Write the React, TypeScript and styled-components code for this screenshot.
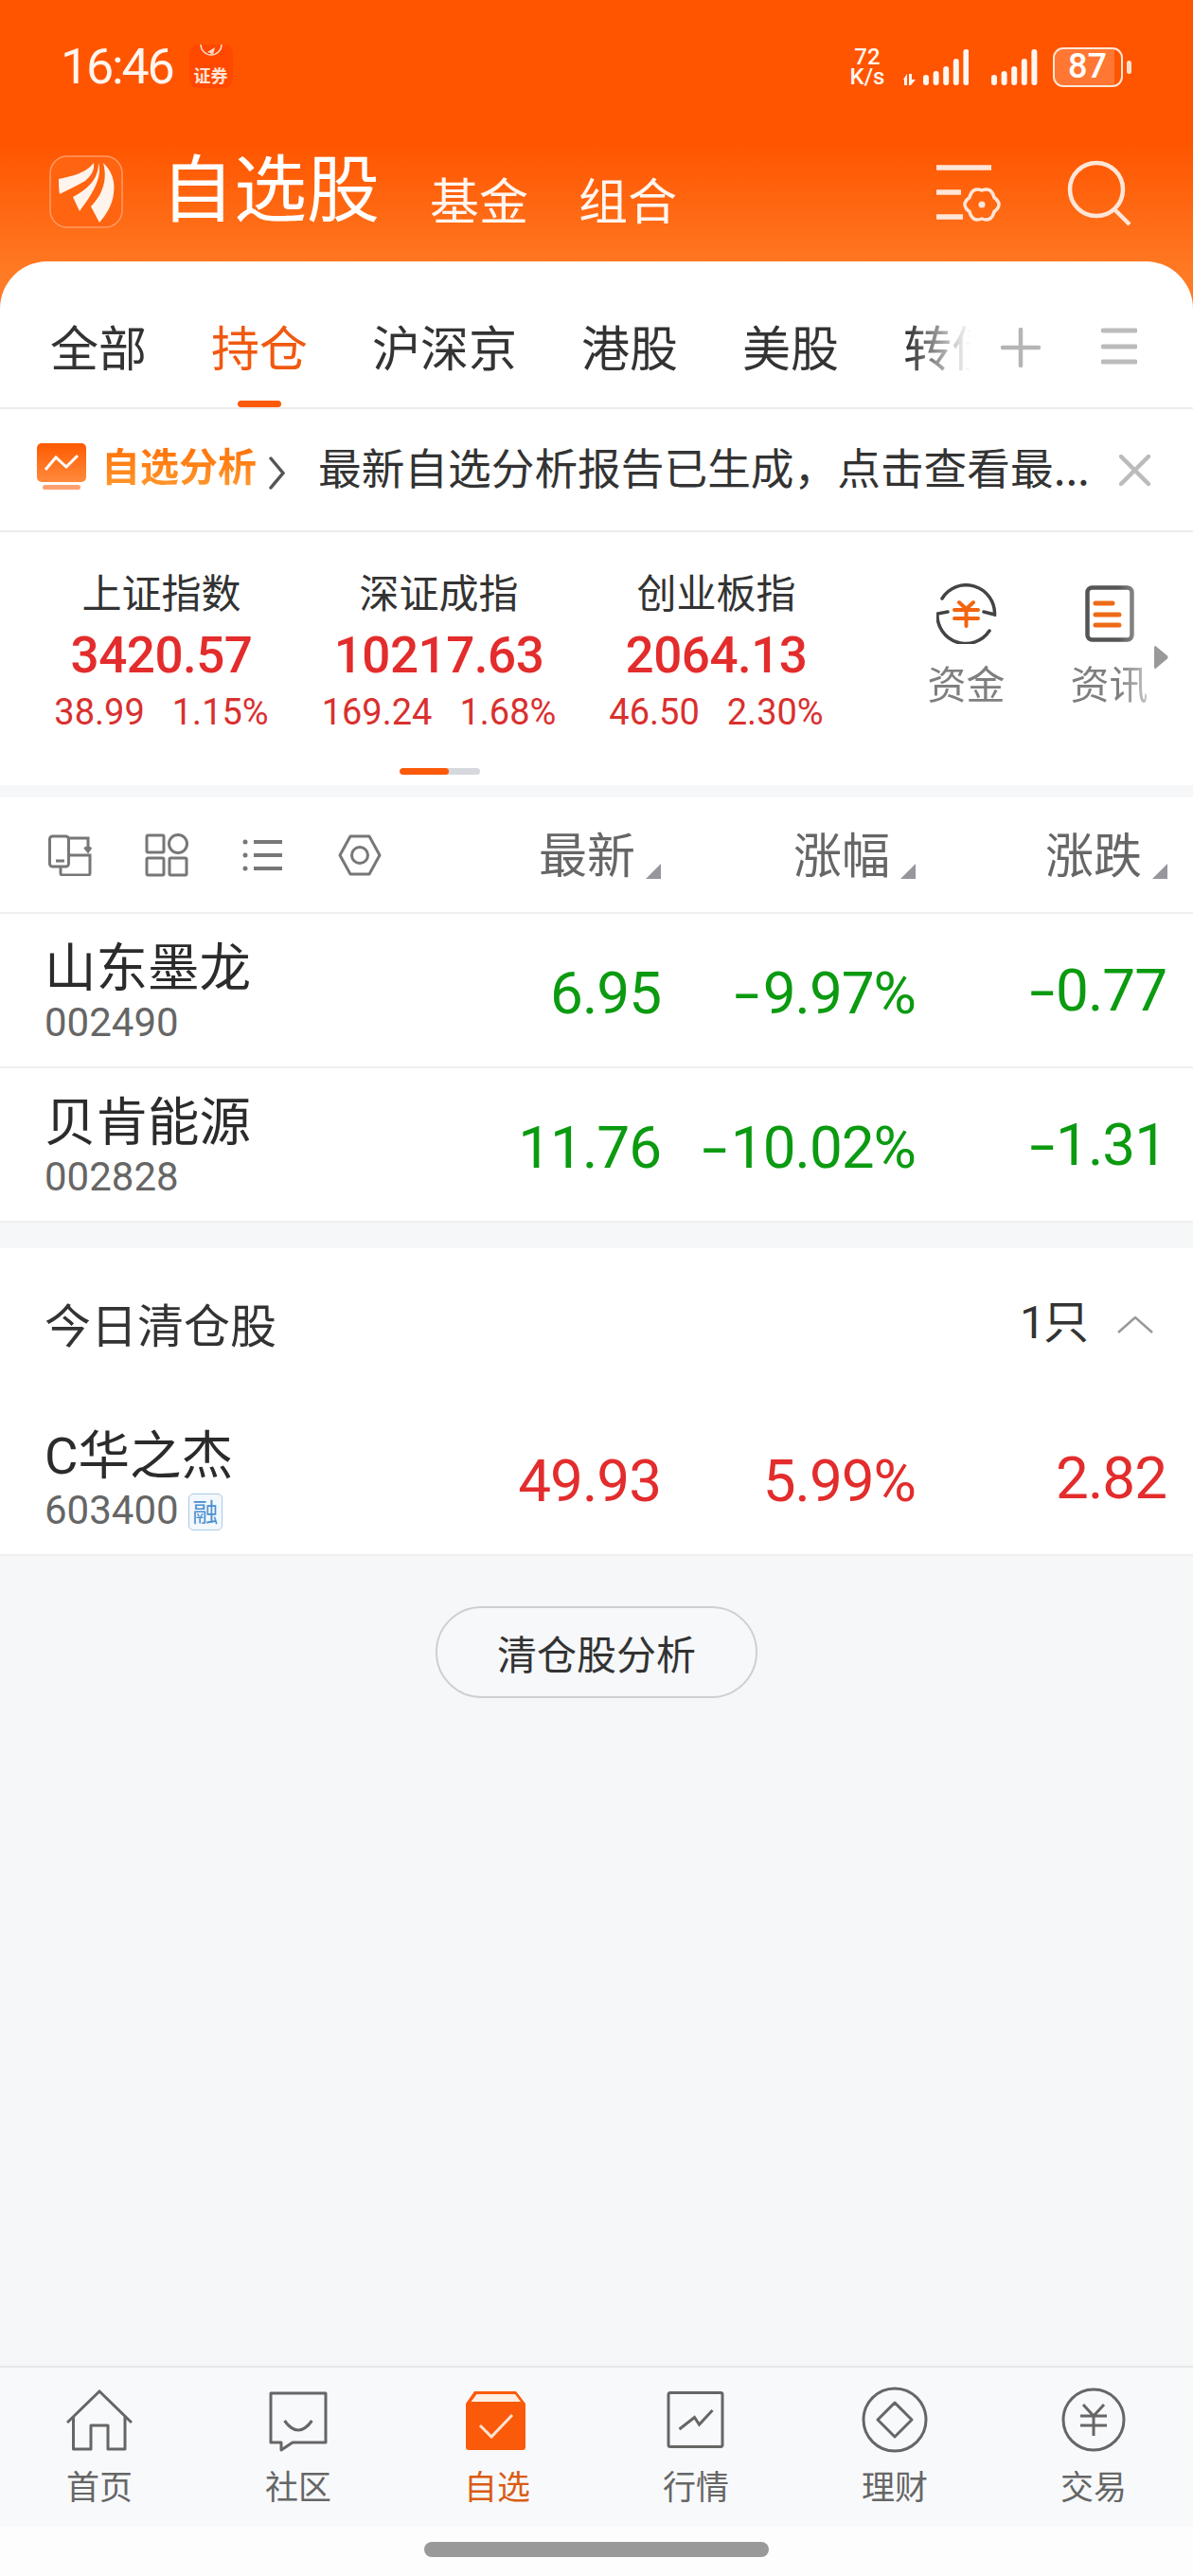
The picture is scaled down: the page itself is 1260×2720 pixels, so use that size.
import React from 'react'
import styled, { createGlobalStyle } from 'styled-components'

const RED = '#e32c2c'
const GREEN = '#0b9a10'
const ORANGE = '#fb5a0a'

const TABS = ['全部', '持仓', '沪深京', '港股', '美股', '转债']

const INDICES = [
  { name: '上证指数', price: '3420.57', change: '38.99', percent: '1.15%' },
  { name: '深证成指', price: '10217.63', change: '169.24', percent: '1.68%' },
  { name: '创业板指', price: '2064.13', change: '46.50', percent: '2.30%' }
]

const NAV_ITEMS = [
  { label: '首页', icon: <HomeIcon /> },
  { label: '社区', icon: <CommunityIcon /> },
  { label: '自选', icon: <WatchIcon />, active: true },
  { label: '行情', icon: <MarketIcon /> },
  { label: '理财', icon: <WealthIcon /> },
  { label: '交易', icon: <TradeIcon /> }
]

function LogoIcon() {
  return (
    <svg width="78" height="77" viewBox="0 0 78 77">
      <rect x="1" y="1" width="76" height="75" rx="18" fill="#ff6410" stroke="#ff9a66" strokeWidth="1.5" />
      <path d="M10 25C22 22 38 20 47 8C48 16 44 22 38 27C30 32 20 36 11 41C10 36 10 30 10 25Z" fill="#fff4ec" />
      <path d="M52 8C56 22 48 38 32 59L25 44C40 36 52 26 52 8Z" fill="#fff4ec" />
      <path d="M57 8C66 16 70 28 68 40C67 52 60 63 53 71L44 54C56 42 62 26 57 8Z" fill="#fff4ec" />
    </svg>
  )
}

function SignalIcon({ arrows }: { arrows?: boolean }) {
  const tops = [27, 23, 18, 10, 0]
  return (
    <svg width={arrows ? 69 : 49} height="38" viewBox={arrows ? '-21 0 69 38' : '0 0 49 38'} fill="#fff6f0">
      {tops.map((top, i) => (
        <rect key={i} x={i * 10.6} y={top} width="6" height={38 - top} rx="3" />
      ))}
      {arrows && <path d="M-21 32L-17 26V38H-20V32ZM-15 26H-12V32L-8 32L-13 38H-15Z" />}
    </svg>
  )
}

function FilterIcon() {
  return (
    <svg width="70" height="70" viewBox="0 0 70 70" fill="none" stroke="#ffe6d8">
      <path d="M0 8H58M0 34H26M0 60H28" strokeWidth="5.5" />
      <path
        d="M61 39.5Q71 47 61 54.5Q58 66 48 62Q38 66 35 54.5Q25 47 35 39.5Q38 28 48 32Q58 28 61 39.5Z"
        strokeWidth="3.5"
      />
      <circle cx="48" cy="47" r="3.5" fill="#ffe6d8" stroke="none" />
    </svg>
  )
}

function SearchIcon() {
  return (
    <svg width="70" height="70" viewBox="0 0 70 70" fill="none" stroke="#ffe6d8" strokeWidth="4.5">
      <circle cx="31" cy="31" r="28" />
      <path d="M50 52L66 68" />
    </svg>
  )
}

function PlusIcon() {
  return (
    <svg width="42" height="42" viewBox="0 0 42 42" fill="none" stroke="#b5b5b5" strokeWidth="4.5" strokeLinecap="round">
      <path d="M21 2V40M2 21H40" />
    </svg>
  )
}

function MenuIcon() {
  return (
    <svg width="38" height="40" viewBox="0 0 38 40" fill="none" stroke="#bbbbbb" strokeWidth="5" strokeLinecap="round">
      <path d="M2 3H36M2 20H36M2 36H36" />
    </svg>
  )
}

function ChartBadgeIcon() {
  return (
    <svg width="52" height="49" viewBox="0 0 52 49">
      <defs>
        <linearGradient id="badge" x1="0" y1="0" x2="0" y2="1">
          <stop offset="0" stopColor="#ff5a00" />
          <stop offset="1" stopColor="#ff8a3c" />
        </linearGradient>
      </defs>
      <rect width="52" height="41" rx="5" fill="url(#badge)" />
      <rect x="6" y="44" width="40" height="5" rx="2.5" fill="#ffa070" />
      <path d="M9 28L20 15L31 25L43 13" fill="none" stroke="#fff" strokeWidth="3" />
    </svg>
  )
}

function ChevronIcon() {
  return (
    <svg width="17" height="35" viewBox="0 0 17 35" fill="none" stroke="#555" strokeWidth="3.5" strokeLinecap="round">
      <path d="M2 2L15 17.5L2 33" />
    </svg>
  )
}

function CloseIcon() {
  return (
    <svg width="33" height="33" viewBox="0 0 33 33" fill="none" stroke="#bbbbbb" strokeWidth="4.5" strokeLinecap="round">
      <path d="M2 2L31 31M31 2L2 31" />
    </svg>
  )
}

function FundsIcon() {
  return (
    <svg width="64" height="64" viewBox="0 0 64 64" fill="none" strokeLinecap="round">
      <path d="M6 16A30 30 0 0 1 61.5 33L50 30M12 30L1 32A30 30 0 0 0 56 50" stroke="#444" strokeWidth="3.5" />
      <path d="M24 20L31.5 27L39 20M19 28H44M19 37H44M31.5 27V45" stroke="#f2640f" strokeWidth="4" />
    </svg>
  )
}

function NewsIcon() {
  return (
    <svg width="52" height="60" viewBox="0 0 52 60" fill="none" strokeLinecap="round">
      <rect x="2.5" y="2.5" width="47" height="55" rx="5" stroke="#555" strokeWidth="4.5" />
      <path d="M11 19H29M11 31H36M11 42H36" stroke="#ee6a16" strokeWidth="5" />
    </svg>
  )
}

function RotateIcon() {
  return (
    <svg width="46" height="44" viewBox="0 0 46 44" fill="none" stroke="#777" strokeWidth="3">
      <rect x="1.5" y="2" width="20" height="32" rx="3" />
      <path d="M8 28H17M21 22H44V41A2 2 0 0 1 42 43H15A2 2 0 0 1 13 41V34M21 4H42V17M38.5 13.5L42 18L45 13.5" />
    </svg>
  )
}

function GridIcon() {
  return (
    <svg width="46" height="46" viewBox="0 0 46 46" fill="none" stroke="#777" strokeWidth="3">
      <rect x="2" y="2" width="18" height="18" rx="1.5" />
      <circle cx="35" cy="11" r="9.5" />
      <rect x="2" y="26" width="18" height="18" rx="1.5" />
      <rect x="26" y="26" width="18" height="18" rx="1.5" />
    </svg>
  )
}

function ListIcon() {
  return (
    <svg width="46" height="46" viewBox="0 0 46 46" fill="none" stroke="#777" strokeWidth="4">
      <path d="M13 9H43M13 23H43M13 37H43" />
      <g fill="#777" stroke="none">
        <circle cx="4" cy="9" r="2.5" />
        <circle cx="4" cy="23" r="2.5" />
        <circle cx="4" cy="37" r="2.5" />
      </g>
    </svg>
  )
}

function NutIcon() {
  return (
    <svg width="46" height="44" viewBox="0 0 46 44" fill="none" stroke="#777" strokeWidth="3" strokeLinejoin="round">
      <path d="M13 2H33L44 22L33 42H13L2 22Z" />
      <circle cx="23" cy="22" r="8.5" />
    </svg>
  )
}

function SortMark() {
  return (
    <svg width="16" height="16" viewBox="0 0 16 16">
      <path d="M16 0V16H0Z" fill="#96969c" />
    </svg>
  )
}

function CollapseIcon() {
  return (
    <svg width="38" height="18" viewBox="0 0 38 18" fill="none" stroke="#999" strokeWidth="2.5">
      <path d="M1 17L19 1L37 17" />
    </svg>
  )
}

function HomeIcon() {
  return (
    <svg width="70" height="70" viewBox="0 0 70 70" fill="none" stroke="#666" strokeWidth="3">
      <path d="M1 38L35 5L69 38" />
      <path d="M7.5 32V66H26V41H44V66H62V32" strokeLinejoin="round" />
    </svg>
  )
}

function CommunityIcon() {
  return (
    <svg width="70" height="70" viewBox="0 0 70 70" fill="none" stroke="#666" strokeWidth="3" strokeLinejoin="round">
      <path d="M6 7H64V59H29L17 67V59H6Z" />
      <path d="M20.5 36Q35 56 49.5 36" />
    </svg>
  )
}

function WatchIcon() {
  return (
    <svg width="70" height="70" viewBox="0 0 70 70" fill="none">
      <path d="M11 5H55L65 18V64A3 3 0 0 1 62 67H5A3 3 0 0 1 2 64V18Z" fill={ORANGE} />
      <path d="M13.5 8H54L60 16H7.5Z" fill="#ffeee3" />
      <path d="M17 41L29 53L51 30" stroke="#ffe3d3" strokeWidth="3" />
    </svg>
  )
}

function MarketIcon() {
  return (
    <svg width="70" height="70" viewBox="0 0 70 70" fill="none" stroke="#666" strokeWidth="3">
      <rect x="6" y="6.5" width="57" height="57" rx="2" />
      <path d="M17.5 45L33.5 32.5L38.5 40L52.5 25" />
    </svg>
  )
}

function WealthIcon() {
  return (
    <svg width="70" height="70" viewBox="0 0 70 70" fill="none" stroke="#666" strokeWidth="3">
      <circle cx="35" cy="35" r="33" />
      <path d="M35 17L53 35L35 53L17 35Z" strokeLinejoin="round" />
    </svg>
  )
}

function TradeIcon() {
  return (
    <svg width="70" height="70" viewBox="0 0 70 70" fill="none" stroke="#666" strokeWidth="3">
      <circle cx="35" cy="35" r="32" />
      <path d="M24 19L35 31L46 19M21 31H49M21 41H49M35 31V52" />
    </svg>
  )
}

export default function App() {
  return (
    <Page>
      <GlobalStyle />
      <TopArea>
        <StatusBar>
          <Clock>16:46</Clock>
          <AppBadge>
            <svg width="24" height="16" viewBox="0 0 24 16" fill="none" stroke="#ffd9c4" strokeWidth="1.5">
              <path d="M1 0A11 11 0 0 0 23 0" />
              <path d="M8 8L16 3L14 11L11 9Z" fill="#ffd9c4" stroke="none" />
            </svg>
            <AppBadgeText>证券</AppBadgeText>
          </AppBadge>
          <StatusRight>
            <NetSpeed>
              <span>72</span>
              <span>K/s</span>
            </NetSpeed>
            <SignalIcon arrows />
            <SignalIcon />
            <Battery>87</Battery>
            <BatteryNub />
          </StatusRight>
        </StatusBar>

        <TitleBar>
          <LogoIcon />
          <PageTitle>自选股</PageTitle>
          <SubTitle>基金</SubTitle>
          <SubTitle>组合</SubTitle>
          <TitleActions>
            <FilterIcon />
            <SearchIcon />
          </TitleActions>
        </TitleBar>

        <TabPanel>
          <TabScroller>
            {TABS.map((tab, i) => (
              <Tab key={tab} $active={i === 1}>
                {tab}
              </Tab>
            ))}
          </TabScroller>
          <TabActions>
            <PlusIcon />
            <MenuIcon />
          </TabActions>
        </TabPanel>
      </TopArea>

      <Banner>
        <ChartBadgeIcon />
        <BannerTitle>自选分析</BannerTitle>
        <ChevronIcon />
        <BannerText>最新自选分析报告已生成，点击查看最...</BannerText>
        <CloseIcon />
      </Banner>

      <IndexSection>
        <IndexRow>
          {INDICES.map(index => (
            <IndexCol key={index.name}>
              <IndexName>{index.name}</IndexName>
              <IndexPrice>{index.price}</IndexPrice>
              <IndexChange>
                <span>{index.change}</span>
                <span>{index.percent}</span>
              </IndexChange>
            </IndexCol>
          ))}
          <ActionStrip>
            <Action>
              <ActionIcon>
                <FundsIcon />
              </ActionIcon>
              <ActionLabel>资金</ActionLabel>
            </Action>
            <Action>
              <ActionIcon>
                <NewsIcon />
              </ActionIcon>
              <ActionLabel>资讯</ActionLabel>
            </Action>
          </ActionStrip>
          <MoreArrow width="16" height="26" viewBox="0 0 16 26">
            <path d="M1 3Q1 0 3 1.5L15 11.5Q16 13 15 14.5L3 24.5Q1 26 1 23Z" fill="#999" />
          </MoreArrow>
        </IndexRow>
        <PageTrack>
          <PageThumb />
        </PageTrack>
      </IndexSection>

      <Toolbar>
        <ToolIcons>
          <RotateIcon />
          <GridIcon />
          <ListIcon />
          <NutIcon />
        </ToolIcons>
        <HeadCell>
          最新
          <SortMark />
        </HeadCell>
        <HeadCell>
          涨幅
          <SortMark />
        </HeadCell>
        <HeadCell>
          涨跌
          <SortMark />
        </HeadCell>
      </Toolbar>

      <StockRow>
        <StockInfo>
          <StockName>山东墨龙</StockName>
          <StockCode>002490</StockCode>
        </StockInfo>
        <StockValue $color={GREEN}>6.95</StockValue>
        <StockValue $color={GREEN}><Minus $wide>-</Minus>9.97%</StockValue>
        <StockValue $color={GREEN} $raised><Minus>-</Minus>0.77</StockValue>
      </StockRow>
      <StockRow>
        <StockInfo>
          <StockName>贝肯能源</StockName>
          <StockCode>002828</StockCode>
        </StockInfo>
        <StockValue $color={GREEN}>11.76</StockValue>
        <StockValue $color={GREEN}><Minus $wide>-</Minus>10.02%</StockValue>
        <StockValue $color={GREEN} $raised><Minus>-</Minus>1.31</StockValue>
      </StockRow>

      <SectionHeader>
        <SectionTitle>今日清仓股</SectionTitle>
        <SectionCount>1只</SectionCount>
        <CollapseIcon />
      </SectionHeader>
      <StockRow>
        <StockInfo>
          <StockName>C华之杰</StockName>
          <CodeLine>
            <StockCode>603400</StockCode>
            <MarginTag>融</MarginTag>
          </CodeLine>
        </StockInfo>
        <StockValue $color={RED}>49.93</StockValue>
        <StockValue $color={RED}>5.99%</StockValue>
        <StockValue $color={RED} $raised>2.82</StockValue>
      </StockRow>

      <Blank>
        <AnalyzeButton>清仓股分析</AnalyzeButton>
      </Blank>

      <BottomNav>
        {NAV_ITEMS.map(item => (
          <NavItem key={item.label} $active={item.active}>
            {item.icon}
            <span>{item.label}</span>
          </NavItem>
        ))}
      </BottomNav>
      <GestureArea>
        <GestureBar />
      </GestureArea>
    </Page>
  )
}

const GlobalStyle = createGlobalStyle`
  html, body {
    margin: 0;
    padding: 0;
    background: #f6f7f9;
  }

  body {
    font-family: Roboto, "Noto Sans CJK SC", sans-serif;
  }
`

const Page = styled.div`
  width: 1260px;
  height: 2720px;
  display: flex;
  flex-direction: column;
  overflow: hidden;
  background: #f6f7f9;
`

const TopArea = styled.header`
  background: linear-gradient(180deg, #ff5500 0, #ff5500 150px, #ff7a24 290px, #ff7a24 100%);
`

const StatusBar = styled.div`
  height: 142px;
  display: flex;
  align-items: center;
  padding: 0 65px 0 64px;
  box-sizing: border-box;
`

const Clock = styled.div`
  font-size: 52px;
  line-height: 60px;
  letter-spacing: -2.2px;
  color: #fff6f0;
`

const AppBadge = styled.div`
  width: 46px;
  height: 46px;
  margin: -2px 0 0 17px;
  border-radius: 9px;
  background: #ff4800;
  display: flex;
  flex-direction: column;
  align-items: center;
  overflow: hidden;
`

const AppBadgeText = styled.span`
  font-family: "Noto Sans CJK SC", sans-serif;
  font-size: 18px;
  line-height: 26px;
  font-weight: 700;
  color: #ffe3d3;
  margin-top: 3px;
`

const StatusRight = styled.div`
  margin-left: auto;
  display: flex;
  align-items: center;
  gap: 24px;
`

const NetSpeed = styled.div`
  width: 40px;
  display: flex;
  flex-direction: column;
  align-items: center;
  margin-right: -6px;
  font-size: 24px;
  line-height: 21px;
  font-weight: 500;
  color: #fff6f0;
`

const Battery = styled.div`
  width: 74px;
  height: 42px;
  box-sizing: border-box;
  margin-left: -8px;
  border: 2.5px solid #ffe6d8;
  border-radius: 11px;
  background: linear-gradient(90deg, rgba(255, 255, 255, 0.2) 90%, transparent 90%);
  background-clip: padding-box;
  font-size: 36px;
  line-height: 37px;
  font-weight: 500;
  color: #fff;
  padding-left: 14px;
`

const BatteryNub = styled.div`
  width: 5px;
  height: 14px;
  margin-left: -20px;
  border-radius: 3px;
  background: #ffe0cc;
`

const TitleBar = styled.div`
  height: 134px;
  display: flex;
  align-items: flex-start;
  padding: 22px 63px 0 52px;
  box-sizing: border-box;
  color: #fff;
`

const PageTitle = styled.h1`
  margin: -24px 0 0 40px;
  font-family: "Noto Sans CJK SC", sans-serif;
  font-size: 77px;
  line-height: 110px;
  font-weight: 400;
`

const SubTitle = styled.span`
  margin: 10px 0 0 53px;
  font-family: "Noto Sans CJK SC", sans-serif;
  font-size: 52px;
  line-height: 72px;
  color: #fff6f0;
`

const TitleActions = styled.div`
  margin: 5px 0 0 auto;
  display: flex;
  align-items: flex-start;
  gap: 68px;
`

const TabPanel = styled.div`
  height: 154px;
  display: flex;
  background: #fff;
  border-radius: 50px 50px 0 0;
  border-bottom: 2px solid #ececec;
`

const TabScroller = styled.div`
  width: 1025px;
  flex: none;
  display: flex;
  gap: 68px;
  padding: 0 0 0 53px;
  box-sizing: border-box;
  overflow: hidden;
  mask-image: linear-gradient(90deg, #000 958px, transparent 1025px);
`

const Tab = styled.div<{ $active?: boolean }>`
  position: relative;
  flex: none;
  padding-top: 53px;
  font-family: "Noto Sans CJK SC", sans-serif;
  font-size: 51px;
  line-height: 72px;
  color: ${props => (props.$active ? '#f0590f' : '#333')};

  ${props =>
    props.$active &&
    `
    &::after {
      content: '';
      position: absolute;
      left: 28px;
      bottom: 0;
      width: 46px;
      height: 7px;
      border-radius: 4px;
      background: ${ORANGE};
    }
  `}
`

const TabActions = styled.div`
  display: flex;
  gap: 64px;
  padding: 70px 0 0 32px;
  align-items: flex-start;
`

const Banner = styled.div`
  height: 128px;
  display: flex;
  align-items: center;
  padding: 0 45px 0 39px;
  background: #fff;
  border-bottom: 2px solid #ececec;

  & > svg:first-child {
    margin-bottom: 7px;
  }

  & > svg:nth-child(3) {
    margin-top: 6px;
  }
`

const BannerTitle = styled.div`
  margin: 0 13px 12px 16px;
  font-family: "Noto Sans CJK SC", sans-serif;
  font-size: 41px;
  line-height: 56px;
  font-weight: 700;
  background: linear-gradient(180deg, #ff6a00, #ff9a30);
  background-clip: text;
  -webkit-background-clip: text;
  color: transparent;
`

const BannerText = styled.div`
  flex: 1;
  margin: 0 0 8px 35px;
  font-family: "Noto Sans CJK SC", sans-serif;
  font-size: 45.7px;
  line-height: 64px;
  color: #333;
  white-space: nowrap;
`

const IndexSection = styled.section`
  height: 267px;
  background: #fff;
  padding: 37px 0 0 24px;
  box-sizing: border-box;
`

const IndexRow = styled.div`
  position: relative;
  display: flex;
`

const IndexCol = styled.div`
  width: 293px;
  display: flex;
  flex-direction: column;
  align-items: center;
`

const IndexName = styled.div`
  margin-bottom: 5px;
  font-family: "Noto Sans CJK SC", sans-serif;
  font-size: 42px;
  line-height: 50px;
  color: #333;
`

const IndexPrice = styled.div`
  font-size: 53px;
  line-height: 76px;
  font-weight: 500;
  letter-spacing: -0.5px;
  color: ${RED};
`

const IndexChange = styled.div`
  display: flex;
  gap: 29px;
  font-size: 38px;
  line-height: 44px;
  color: #d9302f;
`

const ActionStrip = styled.div`
  display: flex;
  margin-left: 42px;
  width: 270px;
  flex: none;
  mask-image: linear-gradient(90deg, #000 236px, rgba(0, 0, 0, 0.45) 267px);
`

const Action = styled.div`
  width: 151px;
  flex: none;
  padding-top: 17px;
  display: flex;
  flex-direction: column;
  align-items: center;
`

const ActionIcon = styled.div`
  height: 64px;
  display: flex;
  align-items: center;
  margin-bottom: 20px;
`

const ActionLabel = styled.div`
  font-family: "Noto Sans CJK SC", sans-serif;
  font-size: 41px;
  line-height: 40px;
  color: #7f7f7f;
`

const MoreArrow = styled.svg`
  position: absolute;
  left: 1194px;
  top: 82px;
`

const PageTrack = styled.div`
  width: 85px;
  height: 7px;
  margin: 37px 0 0 398px;
  border-radius: 4px;
  background: #d5d8dc;
  overflow: hidden;
`

const PageThumb = styled.div`
  width: 52px;
  height: 100%;
  border-radius: 4px;
  background: ${ORANGE};
`

const Toolbar = styled.div`
  height: 121px;
  margin-top: 13px;
  display: grid;
  grid-template-columns: 1fr 200px 269px 266px;
  align-items: center;
  padding: 0 27px 0 51px;
  background: #fff;
  border-bottom: 2px solid #f0f0f0;
`

const ToolIcons = styled.div`
  display: flex;
  gap: 56px;
  align-items: center;
`

const HeadCell = styled.div`
  display: flex;
  justify-content: flex-end;
  align-items: flex-end;
  gap: 11px;
  padding-bottom: 5px;
  font-family: "Noto Sans CJK SC", sans-serif;
  font-size: 51px;
  line-height: 56px;
  color: #666;
`

const StockRow = styled.div`
  height: 161px;
  display: grid;
  grid-template-columns: 1fr 200px 269px 265px;
  padding: 0 28px 0 48px;
  background: #fff;
  border-bottom: 2px solid #f0f0f0;
`

const StockInfo = styled.div`
  padding-top: 26px;
  display: flex;
  flex-direction: column;
`

const StockName = styled.div`
  margin-left: -1px;
  font-family: Roboto, "Noto Sans CJK SC", sans-serif;
  font-size: 54.5px;
  line-height: 62px;
  color: #2b2b2b;
  white-space: nowrap;
`

const StockCode = styled.div`
  margin: 5px 0 0 -1px;
  font-size: 42px;
  line-height: 44px;
  color: #666;
`

const CodeLine = styled.div`
  display: flex;
  align-items: flex-end;
  gap: 10px;
`

const MarginTag = styled.span`
  width: 36px;
  height: 39px;
  box-sizing: border-box;
  margin-bottom: 1px;
  border: 1.5px solid #a9cbe8;
  border-radius: 5px;
  background: #f3f8fd;
  font-family: "Noto Sans CJK SC", sans-serif;
  font-size: 27px;
  line-height: 35px;
  text-align: center;
  color: #4a90d0;
`

const StockValue = styled.div<{ $color: string; $raised?: boolean }>`
  align-self: center;
  text-align: right;
  margin-top: ${props => (props.$raised ? '0' : '6px')};
  font-size: 62px;
  line-height: 70px;
  letter-spacing: -1px;
  color: ${props => props.$color};
`

const Minus = styled.span<{ $wide?: boolean }>`
  display: inline-block;
  margin: 0 ${props => (props.$wide ? '10px' : '7px')} 0 ${props => (props.$wide ? '7px' : '5px')};
  transform: scaleX(1.55);
`

const SectionHeader = styled.div`
  height: 162px;
  margin-top: 27px;
  display: flex;
  align-items: center;
  padding: 0 42px 4px 47px;
  box-sizing: border-box;
  background: #fff;
  font-family: "Noto Sans CJK SC", sans-serif;
  font-size: 49px;
  line-height: 66px;
  color: #333;

  & > svg {
    margin-top: 4px;
  }
`

const SectionTitle = styled.div`
  flex: 1;
`

const SectionCount = styled.div`
  margin-right: 32px;
  font-family: Roboto, "Noto Sans CJK SC", sans-serif;
  font-size: 48px;
  letter-spacing: -2px;
`

const Blank = styled.div`
  flex: 1;
  display: flex;
  justify-content: center;
  align-items: flex-start;
  padding-top: 53px;
`

const AnalyzeButton = styled.button`
  width: 340px;
  height: 97px;
  border: 2px solid #cdcfd4;
  border-radius: 49px;
  background: #f7f8fa;
  font-family: "Noto Sans CJK SC", sans-serif;
  font-size: 42px;
  color: #333;
`

const BottomNav = styled.nav`
  height: 168px;
  display: grid;
  grid-template-columns: repeat(6, 210px);
  background: #f8f9fb;
  border-top: 2px solid #e6e7e9;
`

const NavItem = styled.div<{ $active?: boolean }>`
  padding-top: 20px;
  display: flex;
  flex-direction: column;
  align-items: center;
  gap: 14px;
  font-family: "Noto Sans CJK SC", sans-serif;
  font-size: 35px;
  line-height: 40px;
  color: ${props => (props.$active ? '#d95c16' : '#666')};
`

const GestureArea = styled.div`
  height: 52px;
  display: flex;
  justify-content: center;
  padding-top: 16px;
  box-sizing: border-box;
  background: #fdfdfd;
`

const GestureBar = styled.div`
  width: 364px;
  height: 16px;
  border-radius: 8px;
  background: #999;
`
